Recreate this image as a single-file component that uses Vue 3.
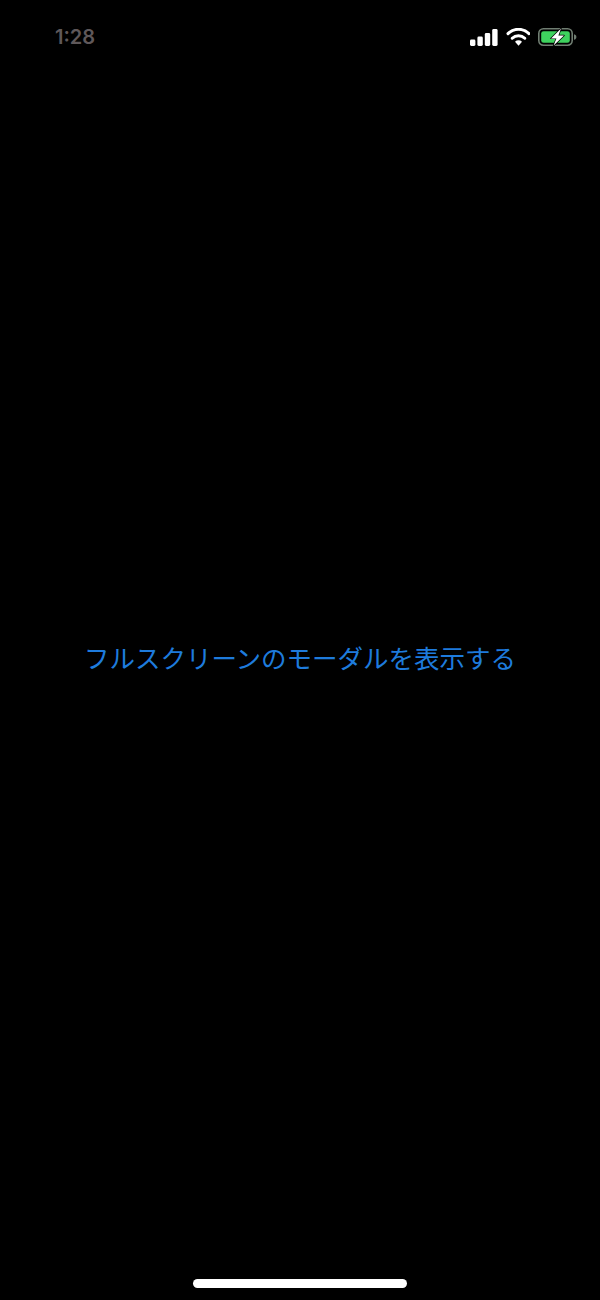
<template>
  <div class="screen">
    <!-- Status bar -->
    <div class="status-bar">
      <span class="time">1:28</span>
      <div class="status-icons">
        <svg class="signal" width="28" height="17" viewBox="0 0 28 17">
          <rect x="0" y="10.5" width="5.4" height="6.5" rx="1.4" fill="#fff" />
          <rect x="7.4" y="7.5" width="5.4" height="9.5" rx="1.4" fill="#fff" />
          <rect x="14.8" y="4" width="5.4" height="13" rx="1.4" fill="#fff" />
          <rect x="22.2" y="0" width="5.4" height="17" rx="1.4" fill="#fff" />
        </svg>
        <svg class="wifi" width="24" height="18" viewBox="0 0 24 18">
          <path d="M2 5.6 A15 15 0 0 1 23 5.6" fill="none" stroke="#fff" stroke-width="3" stroke-linecap="round" />
          <path d="M6.2 10.2 A9 9 0 0 1 18.8 10.2" fill="none" stroke="#fff" stroke-width="3" stroke-linecap="round" />
          <path d="M9 13.8 L12.5 17.8 L16 13.8 A5 5 0 0 0 9 13.8 Z" fill="#fff" />
        </svg>
        <svg class="battery" width="39" height="18" viewBox="0 0 39 18">
          <rect x="0.8" y="0.8" width="33.4" height="16.4" rx="4.6" fill="none" stroke="#6f7d71" stroke-width="1.6" />
          <rect x="3.2" y="3.2" width="28.6" height="11.6" rx="2.4" fill="#3ed25e" />
          <path d="M36 6.2 C37.6 6.6 38.4 7.6 38.4 9 C38.4 10.4 37.6 11.4 36 11.8 Z" fill="#6f7d71" />
          <path class="bolt" d="M23 0.6 L13 10.4 L18.4 10.4 L15.6 17.6 L26 7.4 L20.4 7.4 Z" />
        </svg>
      </div>
    </div>

    <!-- Main content -->
    <main class="content">
      <button class="open-modal" type="button">フルスクリーンのモーダルを表示する</button>
    </main>

    <!-- Home indicator -->
    <div class="home-area">
      <div class="home-indicator"></div>
    </div>
  </div>
</template>

<script setup>
</script>

<style scoped>
.screen {
  width: 600px;
  height: 1300px;
  background: #000;
  display: flex;
  flex-direction: column;
  font-family: "Inter", "Liberation Sans", "Noto Sans CJK JP", sans-serif;
}

.status-bar {
  height: 74px;
  box-sizing: border-box;
  padding: 27px 23px 0 55px;
  display: flex;
  justify-content: space-between;
  align-items: flex-start;
}

.time {
  color: #5f585a;
  font-size: 20px;
  font-weight: 600;
  line-height: 20px;
}

.status-icons {
  display: flex;
  align-items: center;
  gap: 8px;
  margin-top: 1px;
}

.bolt {
  fill: #fff;
  stroke: #000;
  stroke-width: 1.4;
  stroke-linejoin: round;
  paint-order: stroke;
}

.content {
  flex: 1;
  display: flex;
  align-items: center;
  justify-content: center;
  padding-bottom: 39px;
}

.open-modal {
  border: none;
  background: none;
  padding: 0;
  color: #1e7bdc;
  font-family: "Noto Sans CJK JP", sans-serif;
  font-size: 25.5px;
  line-height: 34px;
  white-space: nowrap;
}

.home-area {
  height: 21px;
  display: flex;
  justify-content: center;
}

.home-indicator {
  width: 214px;
  height: 9px;
  border-radius: 4.5px;
  background: #fff;
}
</style>
